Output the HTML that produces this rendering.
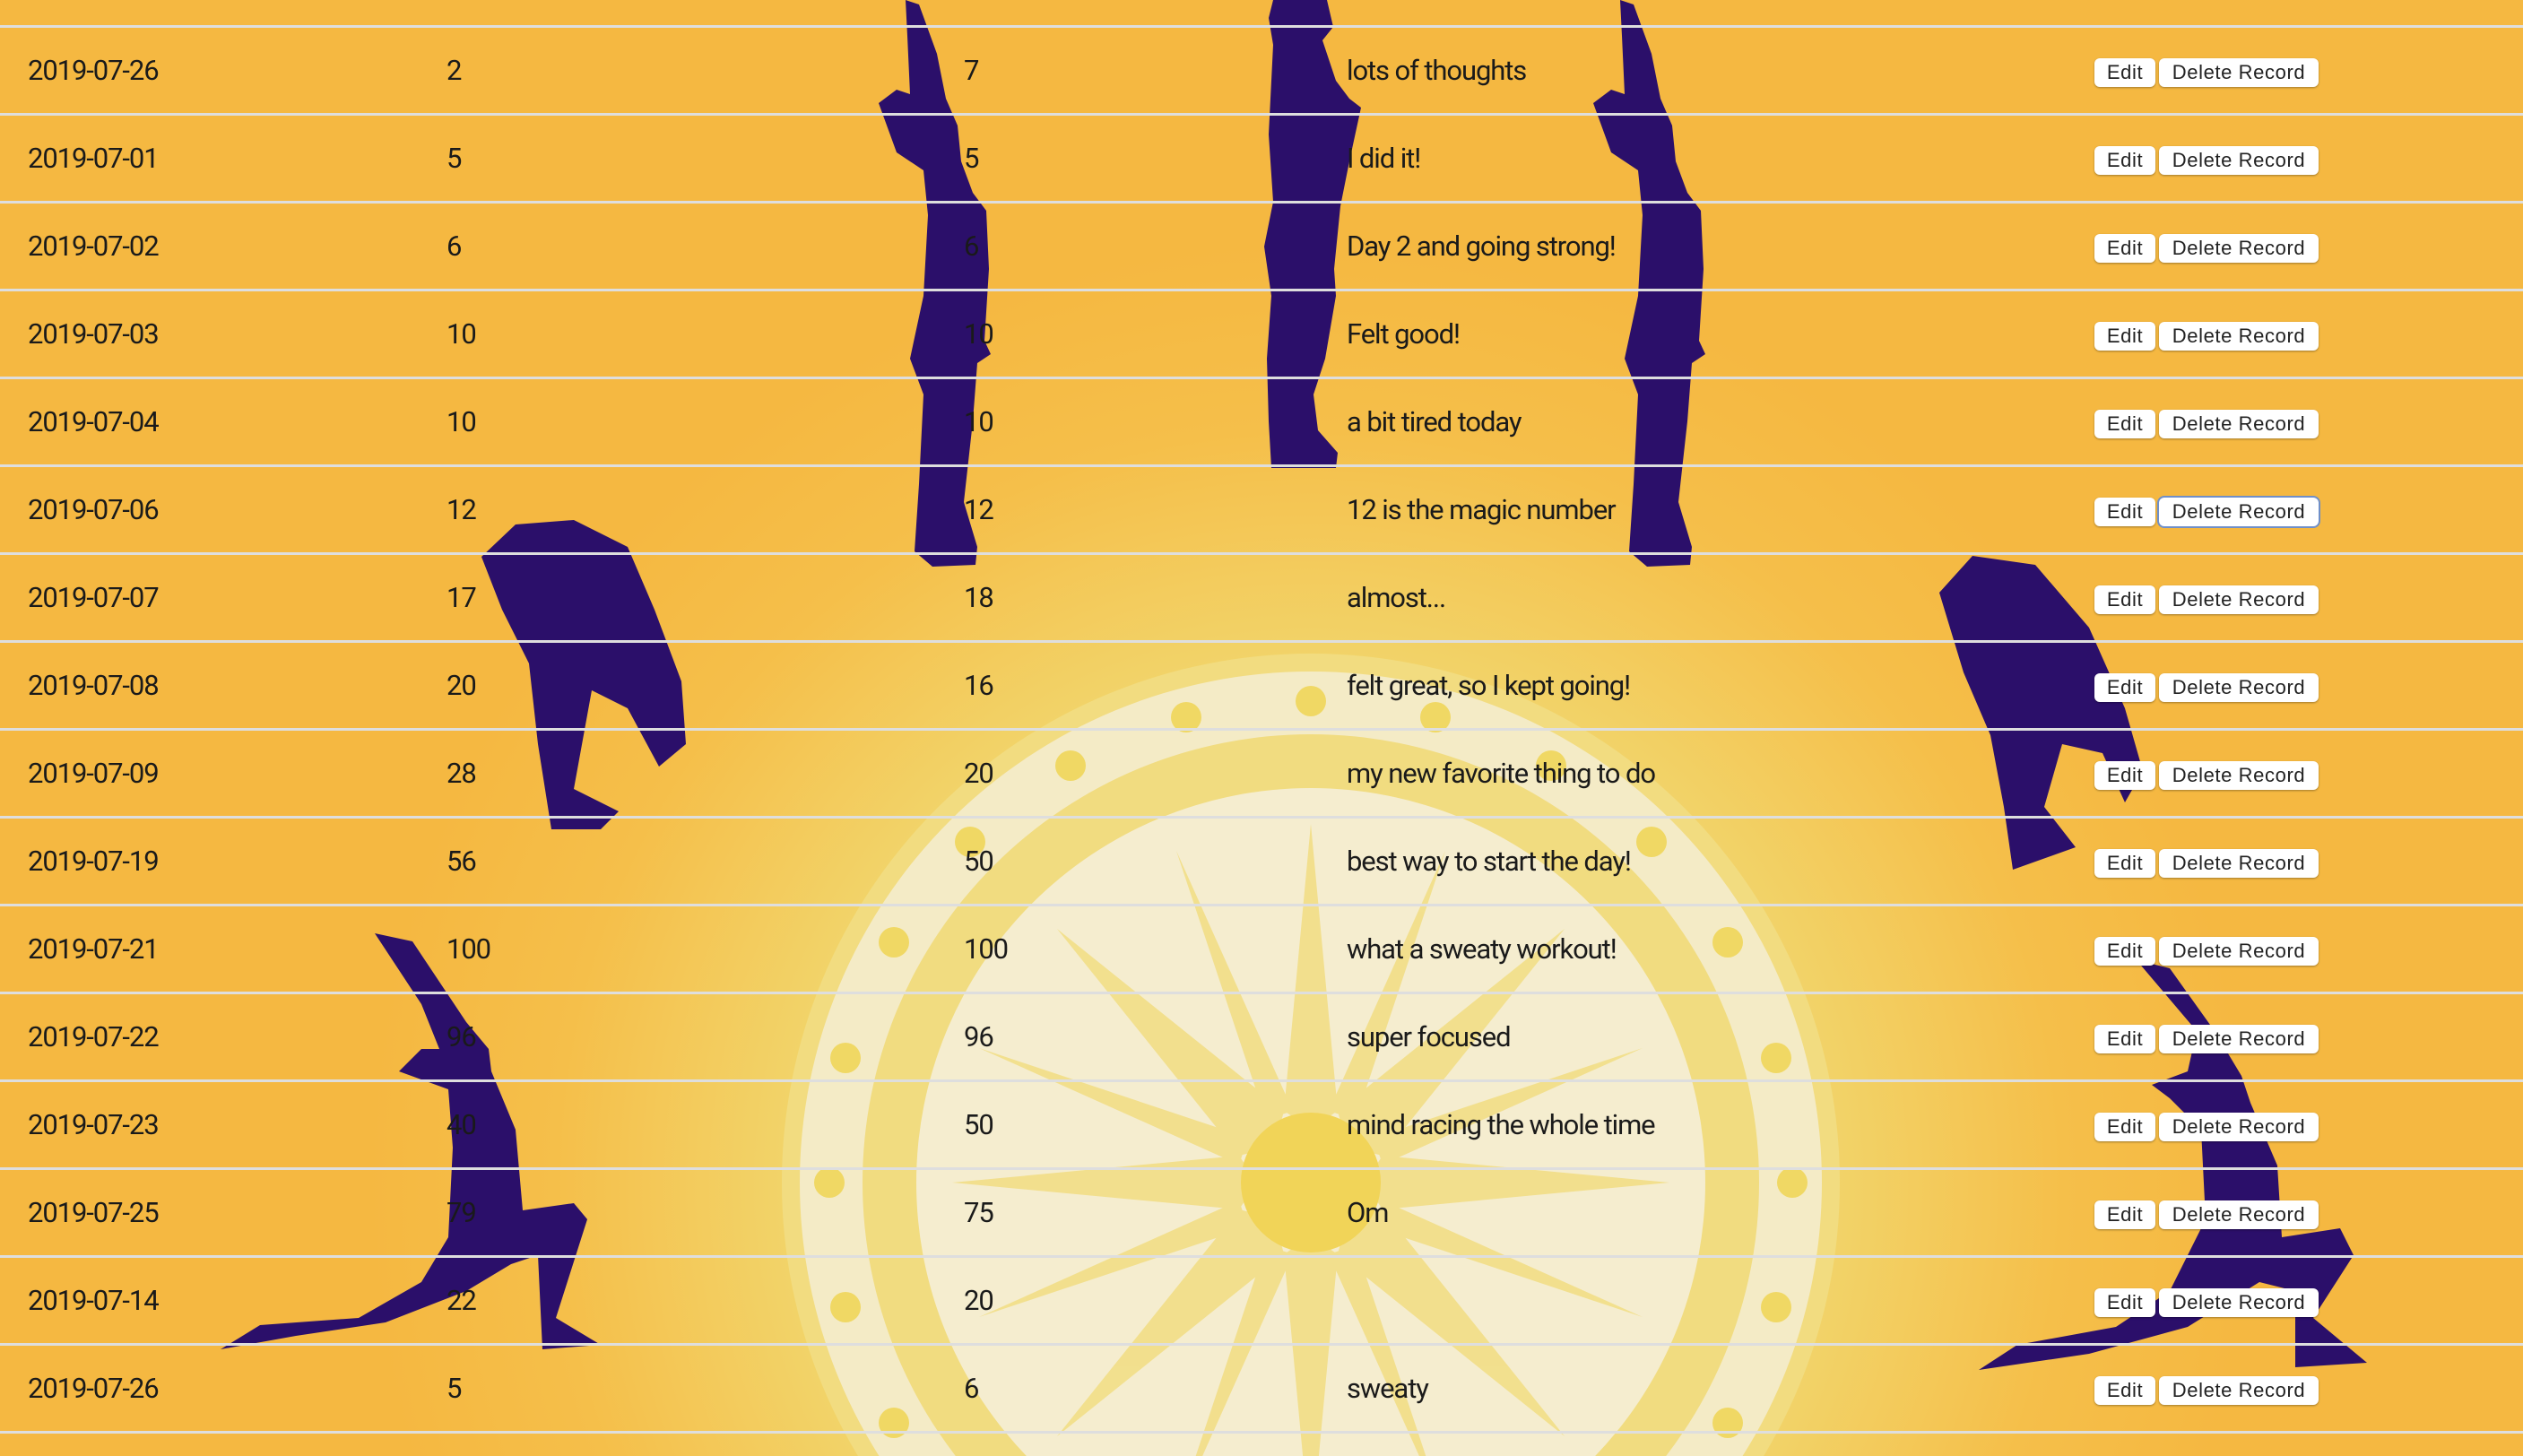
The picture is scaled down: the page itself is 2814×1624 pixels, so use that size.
<!DOCTYPE html>
<html><head><meta charset="utf-8"><style>
html,body{margin:0;padding:0;overflow:hidden;width:2814px;height:1624px}
body{position:relative;background:#F5B841;font-family:"Roboto","Liberation Sans",sans-serif;color:#1a1a1a}
#bg{position:absolute;left:0;top:0}
.line{position:absolute;left:0;width:2814px;height:3px;background:#DEDEDE}
.row{position:absolute;left:0;width:2814px;height:95px}
.c{position:absolute;top:0;line-height:95px;font-size:31px;letter-spacing:-1.1px;white-space:nowrap}
.b{position:absolute;top:34px;height:32px;background:#fff;border-radius:6px;box-shadow:0 1px 2px rgba(0,0,0,.35);font-size:22px;line-height:32px;text-align:center;color:#222;letter-spacing:.6px;font-family:"Liberation Sans",sans-serif}
</style></head><body>
<svg id="bg" width="2814" height="1624" viewBox="0 0 2814 1624">
<defs>
<radialGradient id="g" cx="1460" cy="1320" r="1050" gradientUnits="userSpaceOnUse">
<stop offset="0" stop-color="#F6EAB8"/><stop offset="0.5" stop-color="#F1D870"/><stop offset="0.8" stop-color="#F5BF4A"/><stop offset="1" stop-color="#F5B841"/>
</radialGradient>
</defs>
<rect width="2814" height="1624" fill="url(#g)"/>
<g transform="translate(1462,1319)">
<circle r="590" fill="#F2DC80"/>
<circle r="570" fill="#F4EBC6"/>
<circle r="500" fill="#F1DC80"/>
<circle r="440" fill="#F5EDCF"/>
<g fill="#F1DA72" opacity="0.7">
<polygon points="0,-400 30,-80 0,-60 -30,-80"/><polygon points="0,400 30,80 0,60 -30,80"/>
<polygon points="-400,0 -80,30 -60,0 -80,-30"/><polygon points="400,0 80,30 60,0 80,-30"/>
<polygon points="283,-283 80,-30 40,-40 30,-80"/><polygon points="-283,-283 -80,-30 -40,-40 -30,-80"/>
<polygon points="283,283 80,30 40,40 30,80"/><polygon points="-283,283 -80,30 -40,40 -30,80"/>
<polygon points="150,-370 50,-70 20,-80"/><polygon points="-150,-370 -50,-70 -20,-80"/>
<polygon points="150,370 50,70 20,80"/><polygon points="-150,370 -50,70 -20,80"/>
<polygon points="370,-150 70,-50 80,-20"/><polygon points="-370,-150 -70,-50 -80,-20"/>
<polygon points="370,150 70,50 80,20"/><polygon points="-370,150 -70,50 -80,20"/>
</g>
<circle r="78" fill="#F1D458"/>
<g fill="#F0D864">
<circle cx="0" cy="-537" r="17"/><circle cx="0" cy="537" r="17"/><circle cx="-537" cy="0" r="17"/><circle cx="537" cy="0" r="17"/>
<circle cx="268" cy="-465" r="17"/><circle cx="-268" cy="-465" r="17"/><circle cx="268" cy="465" r="17"/><circle cx="-268" cy="465" r="17"/>
<circle cx="465" cy="-268" r="17"/><circle cx="-465" cy="-268" r="17"/><circle cx="465" cy="268" r="17"/><circle cx="-465" cy="268" r="17"/>
<circle cx="139" cy="-519" r="17"/><circle cx="-139" cy="-519" r="17"/><circle cx="139" cy="519" r="17"/><circle cx="-139" cy="519" r="17"/>
<circle cx="380" cy="-380" r="17"/><circle cx="-380" cy="-380" r="17"/><circle cx="380" cy="380" r="17"/><circle cx="-380" cy="380" r="17"/>
<circle cx="519" cy="-139" r="17"/><circle cx="-519" cy="-139" r="17"/><circle cx="519" cy="139" r="17"/><circle cx="-519" cy="139" r="17"/>
</g>
</g>
<g fill="#2B0F6A">
<polygon id="st" points="1010,0 1025,5 1045,60 1055,110 1068,140 1072,180 1085,215 1100,235 1103,300 1098,380 1105,395 1090,405 1085,470 1075,560 1090,610 1088,630 1040,632 1020,615 1025,540 1030,440 1015,400 1030,330 1035,240 1030,190 1000,170 980,115 1000,100 1015,105 1012,40"/>
<use href="#st" transform="translate(797,0)"/>
<polygon points="1420,0 1480,0 1487,30 1475,45 1490,90 1505,110 1518,120 1505,180 1495,230 1490,280 1488,300 1490,330 1478,400 1465,440 1470,480 1492,505 1490,522 1418,522 1415,470 1413,400 1418,330 1410,275 1420,225 1415,150 1420,50 1415,20"/>
<polygon points="537,621 575,585 640,580 700,610 730,680 760,760 765,830 735,855 700,790 660,770 640,880 690,905 670,925 615,925 600,830 590,740 560,680"/>
<polygon points="2163,661 2200,620 2270,630 2330,700 2370,790 2390,860 2370,895 2345,840 2300,830 2280,900 2315,945 2245,970 2235,900 2220,820 2190,750"/>
<polygon points="418,1041 460,1050 520,1140 545,1170 548,1195 575,1260 583,1350 640,1342 655,1360 620,1470 670,1500 605,1505 600,1400 570,1410 520,1440 430,1475 330,1490 246,1505 290,1478 400,1470 470,1430 500,1380 505,1280 500,1215 445,1195 470,1170 490,1170 470,1120"/>
<polygon points="2383,1071 2420,1080 2470,1150 2500,1200 2510,1230 2540,1300 2545,1380 2610,1370 2625,1400 2580,1470 2640,1520 2560,1525 2560,1440 2520,1430 2440,1480 2330,1510 2207,1528 2250,1500 2360,1480 2420,1440 2460,1360 2455,1260 2420,1225 2400,1210 2440,1195 2450,1150"/>
</g>
</svg>

<div class="line" style="top:28px"></div><div class="line" style="top:126px"></div><div class="line" style="top:224px"></div><div class="line" style="top:322px"></div><div class="line" style="top:420px"></div><div class="line" style="top:518px"></div><div class="line" style="top:616px"></div><div class="line" style="top:714px"></div><div class="line" style="top:812px"></div><div class="line" style="top:910px"></div><div class="line" style="top:1008px"></div><div class="line" style="top:1106px"></div><div class="line" style="top:1204px"></div><div class="line" style="top:1302px"></div><div class="line" style="top:1400px"></div><div class="line" style="top:1498px"></div><div class="line" style="top:1596px"></div>

<div class="row" style="top:31px"><span class="c" style="left:31px">2019-07-26</span><span class="c" style="left:498px">2</span><span class="c" style="left:1075px">7</span><span class="c" style="left:1502px">lots of thoughts</span><span class="b" style="left:2336px;width:68px">Edit</span><span class="b" style="left:2408px;width:178px">Delete Record</span></div>
<div class="row" style="top:129px"><span class="c" style="left:31px">2019-07-01</span><span class="c" style="left:498px">5</span><span class="c" style="left:1075px">5</span><span class="c" style="left:1502px">I did it!</span><span class="b" style="left:2336px;width:68px">Edit</span><span class="b" style="left:2408px;width:178px">Delete Record</span></div>
<div class="row" style="top:227px"><span class="c" style="left:31px">2019-07-02</span><span class="c" style="left:498px">6</span><span class="c" style="left:1075px">6</span><span class="c" style="left:1502px">Day 2 and going strong!</span><span class="b" style="left:2336px;width:68px">Edit</span><span class="b" style="left:2408px;width:178px">Delete Record</span></div>
<div class="row" style="top:325px"><span class="c" style="left:31px">2019-07-03</span><span class="c" style="left:498px">10</span><span class="c" style="left:1075px">10</span><span class="c" style="left:1502px">Felt good!</span><span class="b" style="left:2336px;width:68px">Edit</span><span class="b" style="left:2408px;width:178px">Delete Record</span></div>
<div class="row" style="top:423px"><span class="c" style="left:31px">2019-07-04</span><span class="c" style="left:498px">10</span><span class="c" style="left:1075px">10</span><span class="c" style="left:1502px">a bit tired today</span><span class="b" style="left:2336px;width:68px">Edit</span><span class="b" style="left:2408px;width:178px">Delete Record</span></div>
<div class="row" style="top:521px"><span class="c" style="left:31px">2019-07-06</span><span class="c" style="left:498px">12</span><span class="c" style="left:1075px">12</span><span class="c" style="left:1502px">12 is the magic number</span><span class="b" style="left:2336px;width:68px">Edit</span><span class="b" style="left:2408px;width:178px;box-shadow:0 0 0 2px #6f8fc9">Delete Record</span></div>
<div class="row" style="top:619px"><span class="c" style="left:31px">2019-07-07</span><span class="c" style="left:498px">17</span><span class="c" style="left:1075px">18</span><span class="c" style="left:1502px">almost...</span><span class="b" style="left:2336px;width:68px">Edit</span><span class="b" style="left:2408px;width:178px">Delete Record</span></div>
<div class="row" style="top:717px"><span class="c" style="left:31px">2019-07-08</span><span class="c" style="left:498px">20</span><span class="c" style="left:1075px">16</span><span class="c" style="left:1502px">felt great, so I kept going!</span><span class="b" style="left:2336px;width:68px">Edit</span><span class="b" style="left:2408px;width:178px">Delete Record</span></div>
<div class="row" style="top:815px"><span class="c" style="left:31px">2019-07-09</span><span class="c" style="left:498px">28</span><span class="c" style="left:1075px">20</span><span class="c" style="left:1502px">my new favorite thing to do</span><span class="b" style="left:2336px;width:68px">Edit</span><span class="b" style="left:2408px;width:178px">Delete Record</span></div>
<div class="row" style="top:913px"><span class="c" style="left:31px">2019-07-19</span><span class="c" style="left:498px">56</span><span class="c" style="left:1075px">50</span><span class="c" style="left:1502px">best way to start the day!</span><span class="b" style="left:2336px;width:68px">Edit</span><span class="b" style="left:2408px;width:178px">Delete Record</span></div>
<div class="row" style="top:1011px"><span class="c" style="left:31px">2019-07-21</span><span class="c" style="left:498px">100</span><span class="c" style="left:1075px">100</span><span class="c" style="left:1502px">what a sweaty workout!</span><span class="b" style="left:2336px;width:68px">Edit</span><span class="b" style="left:2408px;width:178px">Delete Record</span></div>
<div class="row" style="top:1109px"><span class="c" style="left:31px">2019-07-22</span><span class="c" style="left:498px">96</span><span class="c" style="left:1075px">96</span><span class="c" style="left:1502px">super focused</span><span class="b" style="left:2336px;width:68px">Edit</span><span class="b" style="left:2408px;width:178px">Delete Record</span></div>
<div class="row" style="top:1207px"><span class="c" style="left:31px">2019-07-23</span><span class="c" style="left:498px">40</span><span class="c" style="left:1075px">50</span><span class="c" style="left:1502px">mind racing the whole time</span><span class="b" style="left:2336px;width:68px">Edit</span><span class="b" style="left:2408px;width:178px">Delete Record</span></div>
<div class="row" style="top:1305px"><span class="c" style="left:31px">2019-07-25</span><span class="c" style="left:498px">79</span><span class="c" style="left:1075px">75</span><span class="c" style="left:1502px">Om</span><span class="b" style="left:2336px;width:68px">Edit</span><span class="b" style="left:2408px;width:178px">Delete Record</span></div>
<div class="row" style="top:1403px"><span class="c" style="left:31px">2019-07-14</span><span class="c" style="left:498px">22</span><span class="c" style="left:1075px">20</span><span class="b" style="left:2336px;width:68px">Edit</span><span class="b" style="left:2408px;width:178px">Delete Record</span></div>
<div class="row" style="top:1501px"><span class="c" style="left:31px">2019-07-26</span><span class="c" style="left:498px">5</span><span class="c" style="left:1075px">6</span><span class="c" style="left:1502px">sweaty</span><span class="b" style="left:2336px;width:68px">Edit</span><span class="b" style="left:2408px;width:178px">Delete Record</span></div>
</body></html>
